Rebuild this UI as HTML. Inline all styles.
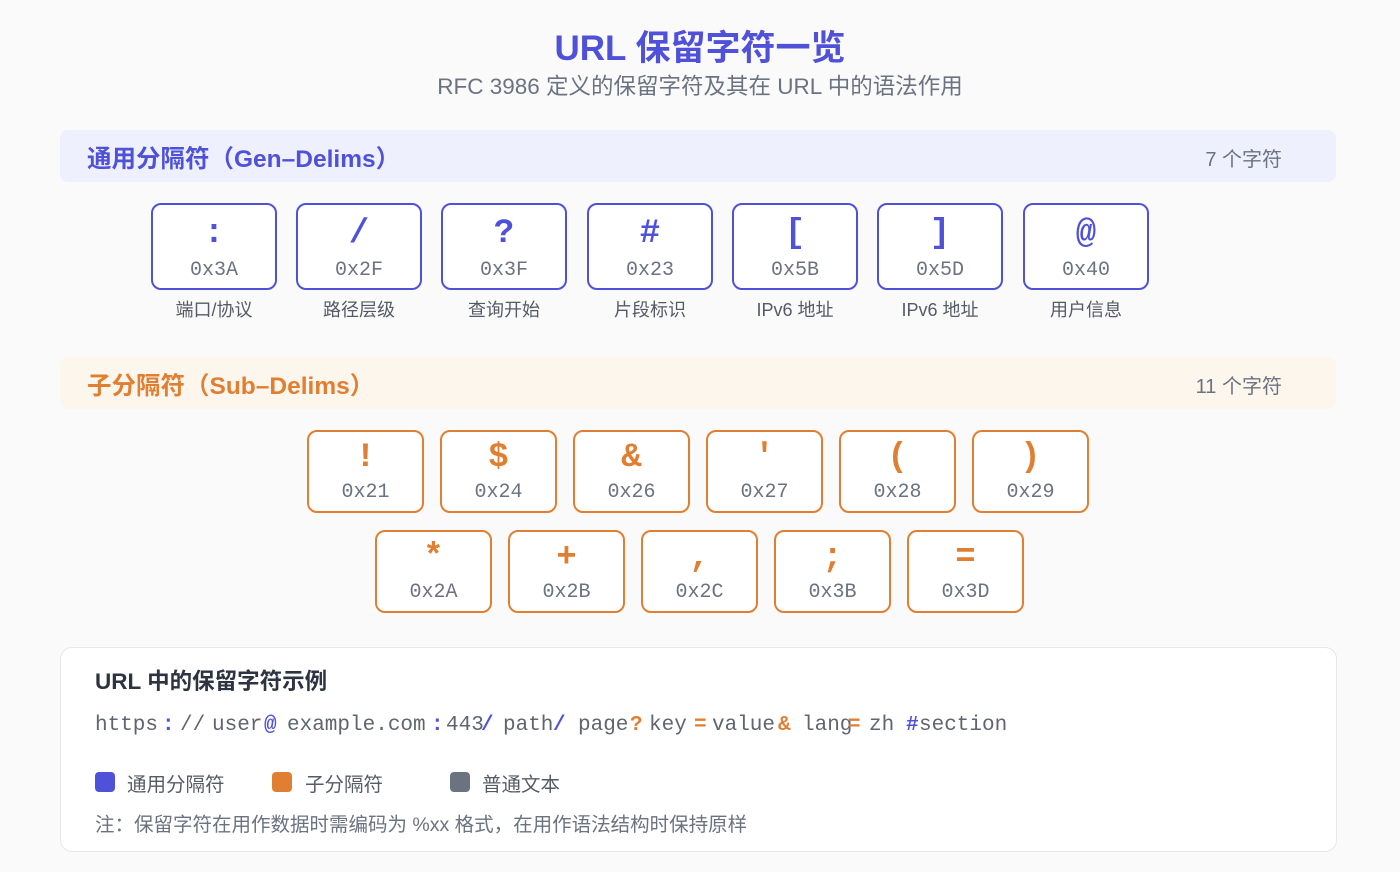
<!DOCTYPE html>
<html><head><meta charset="utf-8"><style>
*{margin:0;padding:0;box-sizing:border-box}
body{width:1400px;height:872px;background:#fafafb;font-family:"Liberation Sans","Noto Sans CJK SC",sans-serif;position:relative;overflow:hidden}
.a{position:absolute;white-space:nowrap}
.t{left:0;width:1400px;text-align:center}
.band{position:absolute;left:60px;width:1276px;height:52px;border-radius:8px}
.bt{position:absolute;left:27px;top:10px;font-size:24.5px;font-weight:bold}
.bc{position:absolute;right:54px;top:13px;font-size:20px;color:#6b7280}
.k{position:absolute;background:#fff;border:2.5px solid;border-radius:10px;text-align:center;font-family:"Liberation Mono","DejaVu Sans Mono",monospace}
.g{width:126px;height:87px;top:203px;border-color:#4f52d8}
.s{width:117px;height:83px;border-color:#e07f32}
.k b{display:block;font-size:34px;line-height:34px;margin-top:12px}
.g b{color:#4f52d8}.s b{color:#e07f32}
.k span{display:block;font-size:20px;line-height:22px;margin-top:9px;color:#6b7280}
.s b{margin-top:9px}
.s span{margin-top:7px}
.lb{position:absolute;top:296px;width:126px;text-align:center;font-size:18px;color:#555b66}
.m{position:absolute;top:714px;font-family:"Liberation Mono","DejaVu Sans Mono",monospace;font-size:21px;color:#5f6570}
.bl{color:#4f52d8;font-weight:bold}.or{color:#e07f32;font-weight:bold}
.sq{position:absolute;top:772px;width:20px;height:20px;border-radius:4px}
.lg{position:absolute;top:768px;font-size:19.5px;color:#555b66}
</style></head><body>
<div class="a t" style="top:20px;font-size:35px;font-weight:bold;color:#4f52d8">URL 保留字符一览</div>
<div class="a t" style="top:69px;font-size:22.5px;color:#6b7280">RFC 3986 定义的保留字符及其在 URL 中的语法作用</div>

<div class="band" style="top:130px;background:#eef0fd"><div class="bt" style="color:#4f52d8">通用分隔符（Gen–Delims）</div><div class="bc">7 个字符</div></div>

<div class="k g" style="left:151px"><b>:</b><span>0x3A</span></div>
<div class="k g" style="left:296px"><b>/</b><span>0x2F</span></div>
<div class="k g" style="left:441px"><b>?</b><span>0x3F</span></div>
<div class="k g" style="left:587px"><b>#</b><span>0x23</span></div>
<div class="k g" style="left:732px"><b>[</b><span>0x5B</span></div>
<div class="k g" style="left:877px"><b>]</b><span>0x5D</span></div>
<div class="k g" style="left:1023px"><b>@</b><span>0x40</span></div>
<div class="lb" style="left:151px">端口/协议</div>
<div class="lb" style="left:296px">路径层级</div>
<div class="lb" style="left:441px">查询开始</div>
<div class="lb" style="left:587px">片段标识</div>
<div class="lb" style="left:732px">IPv6 地址</div>
<div class="lb" style="left:877px">IPv6 地址</div>
<div class="lb" style="left:1023px">用户信息</div>

<div class="band" style="top:357px;background:#fdf6ec"><div class="bt" style="color:#e07f32">子分隔符（Sub–Delims）</div><div class="bc">11 个字符</div></div>

<div class="k s" style="left:307px;top:430px"><b>!</b><span>0x21</span></div>
<div class="k s" style="left:440px;top:430px"><b>$</b><span>0x24</span></div>
<div class="k s" style="left:573px;top:430px"><b>&amp;</b><span>0x26</span></div>
<div class="k s" style="left:706px;top:430px"><b>'</b><span>0x27</span></div>
<div class="k s" style="left:839px;top:430px"><b>(</b><span>0x28</span></div>
<div class="k s" style="left:972px;top:430px"><b>)</b><span>0x29</span></div>
<div class="k s" style="left:375px;top:530px"><b>*</b><span>0x2A</span></div>
<div class="k s" style="left:508px;top:530px"><b>+</b><span>0x2B</span></div>
<div class="k s" style="left:641px;top:530px"><b>,</b><span>0x2C</span></div>
<div class="k s" style="left:774px;top:530px"><b>;</b><span>0x3B</span></div>
<div class="k s" style="left:907px;top:530px"><b>=</b><span>0x3D</span></div>

<div style="position:absolute;left:60px;top:647px;width:1277px;height:205px;background:#fff;border:1.5px solid #e5e7eb;border-radius:12px"></div>
<div class="a" style="left:95px;top:664px;font-size:22.5px;font-weight:bold;color:#2d3340">URL 中的保留字符示例</div>

<span class="m" style="left:95px">https</span>
<span class="m bl" style="left:162px">:</span>
<span class="m" style="left:180px">//</span>
<span class="m" style="left:212px">user</span>
<span class="m bl" style="left:264px">@</span>
<span class="m" style="left:287px">example.com</span>
<span class="m bl" style="left:431px">:</span>
<span class="m" style="left:446px">443</span>
<span class="m bl" style="left:481px">/</span>
<span class="m" style="left:503px">path</span>
<span class="m bl" style="left:553px">/</span>
<span class="m" style="left:578px">page</span>
<span class="m or" style="left:630px">?</span>
<span class="m" style="left:649px">key</span>
<span class="m or" style="left:694px">=</span>
<span class="m" style="left:712px">value</span>
<span class="m or" style="left:778px">&amp;</span>
<span class="m" style="left:802px">lang</span>
<span class="m or" style="left:848px">=</span>
<span class="m" style="left:869px">zh</span>
<span class="m bl" style="left:906px">#</span>
<span class="m" style="left:919px">section</span>

<div class="sq" style="left:95px;background:#4f52d8"></div><div class="lg" style="left:127px">通用分隔符</div>
<div class="sq" style="left:272px;background:#e07f32"></div><div class="lg" style="left:305px">子分隔符</div>
<div class="sq" style="left:450px;background:#6b7280"></div><div class="lg" style="left:482px">普通文本</div>
<div class="a" style="left:95px;top:808px;font-size:19.5px;color:#6b7280">注：保留字符在用作数据时需编码为 %xx 格式，在用作语法结构时保持原样</div>
</body></html>
